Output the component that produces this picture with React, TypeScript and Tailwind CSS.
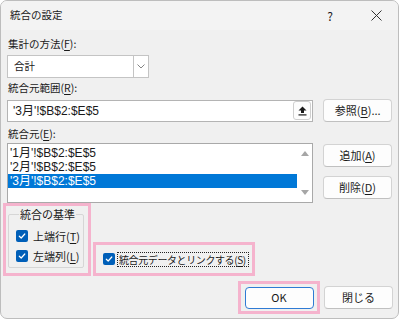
import React from 'react';

const FONT = '"Noto Sans CJK JP", "Noto Sans", sans-serif';
const LIST_FONT = '"Liberation Sans", "Noto Sans CJK JP", sans-serif';

function Check() {
  return (
    <span className="w-[12px] h-[12px] rounded-[2px] bg-[#005fb8] flex items-center justify-center shrink-0">
      <svg width="8" height="8" viewBox="0 0 8 8" fill="none" stroke="#fff" strokeWidth="1.2" strokeLinecap="round" strokeLinejoin="round">
        <polyline points="1.3 4.2 3.2 6 6.8 2" />
      </svg>
    </span>
  );
}

function Key({ k }: { k: string }) {
  return (
    <>
      (<span className="underline underline-offset-2">{k}</span>)
    </>
  );
}

function Btn({ children, primary }: { children: React.ReactNode; primary?: boolean }) {
  return (
    <button
      className={
        primary
          ? 'w-[69px] h-[22px] rounded-[4px] bg-[#fdfdfd] border border-[#2f7bd4] text-[11px] leading-none text-[#1a1a1a] flex items-center justify-center whitespace-nowrap'
          : 'w-[69px] h-[23px] rounded-[4px] bg-[#fdfdfd] border border-[#d3d3d3] border-b-[#c0c0c0] text-[11px] leading-none text-[#1a1a1a] flex items-center justify-center whitespace-nowrap'
      }
    >
      {children}
    </button>
  );
}

export default function App() {
  const items = ["'1月'!$B$2:$E$5", "'2月'!$B$2:$E$5", "'3月'!$B$2:$E$5"];
  return (
    <div className="w-[400px] h-[320px] bg-white" style={{ fontFamily: FONT }}>
      <div className="w-[399px] h-[319px] border border-[#bdbdbd] rounded-[7px] bg-[#f0f0f0] overflow-hidden flex flex-col text-[#1a1a1a] whitespace-nowrap">
        {/* title bar */}
        <div className="h-[29px] bg-[#f3f3f3] flex items-center pl-[9px] shrink-0">
          <span className="text-[10.5px] leading-none">統合の設定</span>
          <span className="ml-auto text-[12px] leading-none mr-[38px]">?</span>
          <svg className="mr-[16px]" width="11" height="11" viewBox="0 0 11 11" stroke="#333" strokeWidth="1" fill="none">
            <path d="M0.5 0.5 L10.5 10.5 M10.5 0.5 L0.5 10.5" />
          </svg>
        </div>

        <div className="flex flex-col px-[6px] text-[10.5px]">
          <div className="h-[16px] leading-[16px] mt-[6px] pl-[1px]">
            集計の方法<Key k="F" />:
          </div>
          <div className="mt-[3px] w-[142px] h-[23px] bg-white border border-[#c4c4c4] flex items-center">
            <span className="pl-[6px] flex-1 leading-none">合計</span>
            <span className="w-[15px] h-full border-l border-[#c4c4c4] flex items-center justify-center">
              <svg width="8" height="5" viewBox="0 0 8 5" fill="none" stroke="#777" strokeWidth="0.9">
                <polyline points="0.5 0.5 4 4 7.5 0.5" />
              </svg>
            </span>
          </div>

          <div className="h-[16px] leading-[16px] mt-[2px] pl-[1px]">
            統合元範囲<Key k="R" />:
          </div>
          <div className="mt-[3px] flex items-center gap-[10px]">
            <div className="w-[308px] h-[22px] bg-white border border-[#b4b4b4] flex items-center">
              <span className="pl-[5px] flex-1 leading-none text-[12px]" style={{ fontFamily: LIST_FONT }}>
                '3月'!$B$2:$E$5
              </span>
              <span className="w-[18px] h-[19px] mr-[1px] border border-[#cfcfcf] rounded-[3px] bg-[#fdfdfd] flex items-center justify-center">
                <svg width="9" height="10" viewBox="0 0 9 10" fill="#1a1a1a">
                  <path d="M4.5 0.5 L8.5 4.5 L6 4.5 L6 7 L3 7 L3 4.5 L0.5 4.5 Z" />
                  <rect x="0.5" y="8.3" width="8" height="1.2" />
                </svg>
              </span>
            </div>
            <Btn>
              参照<Key k="B" />...
            </Btn>
          </div>

          <div className="h-[16px] leading-[16px] mt-[4px] pl-[1px]">
            統合元<Key k="E" />:
          </div>
          <div className="mt-[1px] flex items-start gap-[10px]">
            <div className="w-[308px] h-[60px] bg-white border border-[#a9a9a9] flex">
              <div className="flex-1 pt-[2px] flex flex-col text-[12px]" style={{ fontFamily: LIST_FONT }}>
                {items.map((t, i) => (
                  <div
                    key={t}
                    className={
                      i === 2
                        ? 'h-[14px] leading-[14px] pl-[2px] bg-[#0078d7] text-white'
                        : 'h-[14px] leading-[14px] pl-[2px]'
                    }
                  >
                    {t}
                  </div>
                ))}
              </div>
              <div className="w-[15px] flex flex-col items-center justify-between py-[7px]">
                <svg width="8" height="5" viewBox="0 0 8 5" fill="#a6a6a6">
                  <path d="M4 0 L8 5 L0 5 Z" />
                </svg>
                <svg width="8" height="5" viewBox="0 0 8 5" fill="#a6a6a6">
                  <path d="M0 0 L8 0 L4 5 Z" />
                </svg>
              </div>
            </div>
            <div className="flex flex-col gap-[9px] pt-[1px]">
              <Btn>
                追加<Key k="A" />
              </Btn>
              <Btn>
                削除<Key k="D" />
              </Btn>
            </div>
          </div>
        </div>

        {/* bottom options */}
        <div className="flex items-end pl-[2px] text-[10.5px]">
          <div className="w-[88px] h-[73px] border-[3px] border-[#f5b3cd] flex pl-[2px] pr-[4px]">
            <fieldset className="flex-1 border border-[#d6d6d6] rounded-[2px] pl-[7px] h-[62px] min-w-0">
              <legend className="ml-[3px] px-[1px] leading-[16px] text-[11px]">統合の基準</legend>
              <div className="flex items-center gap-[5px] h-[14px] mt-[7px]">
                <Check />
                <span className="leading-none text-[11px]">
                  上端行<Key k="T" />
                </span>
              </div>
              <div className="flex items-center gap-[5px] h-[14px] mt-[6px]">
                <Check />
                <span className="leading-none text-[11px]">
                  左端列<Key k="L" />
                </span>
              </div>
            </fieldset>
          </div>
          <div className="ml-[2px] h-[34px] border-[3px] border-[#f5b3cd] flex items-center pl-[7px] pr-[3px] gap-[2px]">
            <Check />
            <span className="leading-[13px] border border-dotted border-[#222] pl-[1px] pr-[2px] text-[10px] tracking-[-0.4px]">
              統合元データとリンクする<Key k="S" />
            </span>
          </div>
        </div>

        <div className="flex items-center justify-end pr-[5px] mt-[5px] gap-[4px]">
          <div className="w-[82px] h-[33px] border-[3px] border-[#f5b3cd] flex items-center justify-center">
            <Btn primary>OK</Btn>
          </div>
          <Btn>閉じる</Btn>
        </div>
      </div>
    </div>
  );
}
